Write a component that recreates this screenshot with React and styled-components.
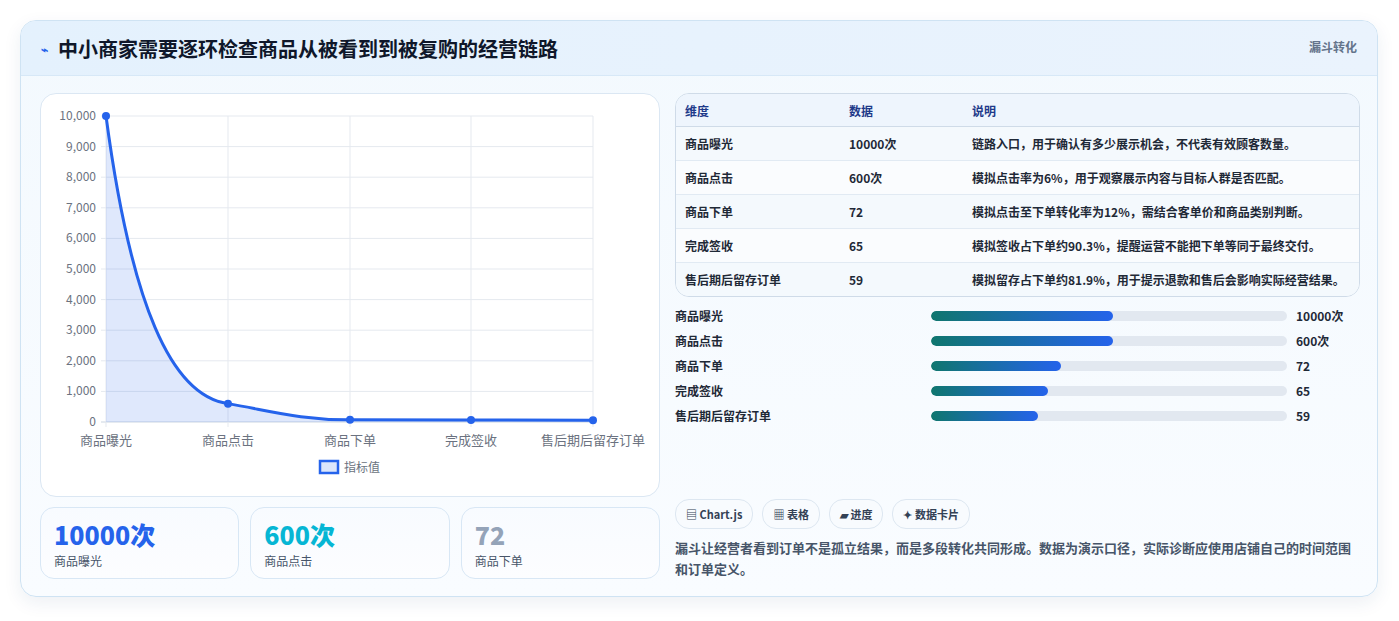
import React from "react";
import styled, { createGlobalStyle } from "styled-components";

const G = createGlobalStyle`
  body{margin:0;background:#fff;font-family:"Noto Sans CJK SC","Noto Sans",sans-serif;}
`;
const Page = styled.div`padding:20px 21px 22px 20px;`;
const Card = styled.div`
  border:1px solid #cfe3f3;border-radius:16px;overflow:hidden;
  background:linear-gradient(180deg,#f3f9fe,#f9fcff);
  box-shadow:0 6px 18px rgba(30,60,120,.08);
`;
const Header = styled.div`
  height:54px;display:flex;align-items:center;justify-content:space-between;
  padding:0 20px;background:linear-gradient(90deg,#e4f1fd,#eaf3fd);border-bottom:1px solid #d7e8f7;
`;
const Title = styled.h1`
  margin:0;font-size:20px;font-weight:700;color:#0f172a;display:flex;align-items:center;gap:10px;
  span{font-size:12px;color:#2563eb;}
`;
const Tag = styled.div`font-size:12px;font-weight:700;color:#64748b;align-self:flex-start;margin-top:17px;`;
const Body = styled.div`display:grid;grid-template-columns:620px 1fr;gap:15px;padding:17px 17px 17px 19px;`;
const Col = styled.div`display:flex;flex-direction:column;gap:10px;`;
const ChartBox = styled.div`background:#fff;border:1px solid #dbe7f3;border-radius:16px;height:402px;`;
const Stats = styled.div`display:grid;grid-template-columns:repeat(3,1fr);gap:11px;`;
const Stat = styled.div`
  border:1px solid #d8e7f5;border-radius:14px;height:72px;padding:10px 13px;box-sizing:border-box;
  background:linear-gradient(180deg,#f8fbff,#fcfdff);
`;
const StatVal = styled.div`font-size:25px;font-weight:800;line-height:32px;color:${p=>p.c};`;
const StatLbl = styled.div`font-size:12px;color:#475569;margin-top:2px;`;
const Table = styled.table`
  width:100%;border-collapse:separate;border-spacing:0;border:1px solid #cfdbe8;border-radius:14px;overflow:hidden;
  font-size:12px;
  th{text-align:left;color:#1e3a8a;font-weight:700;height:32px;padding:0 9px;background:#eef5fd;border-bottom:1px solid #cfdbe8;}
  td{height:33px;padding:0 9px;color:#1f2937;font-weight:600;border-top:1px solid #e1eaf3;}
  tbody tr:first-child td{border-top:none;}
  tbody tr:nth-child(odd) td{background:#f4f9fd;}
  tbody tr:nth-child(even) td{background:#fafcfe;}
`;
const Bars = styled.div`display:flex;flex-direction:column;gap:8px;`;
const BarRow = styled.div`display:grid;grid-template-columns:247px 356px 1fr;align-items:center;gap:9px;font-size:12px;font-weight:700;color:#1f2937;height:17px;`;
const Track = styled.div`height:10px;border-radius:5px;background:#e2e8f0;overflow:hidden;`;
const Fill = styled.div`height:100%;border-radius:5px;background:linear-gradient(90deg,#0f766e,#2563eb);`;
const Chips = styled.div`display:flex;gap:9px;margin-top:auto;`;
const Chip = styled.div`height:28px;padding:0 10px;border:1px solid #dde7f1;border-radius:14px;background:#f8fbfe;display:flex;align-items:center;gap:4px;font-size:11px;font-weight:700;color:#334155;`;
const Note = styled.p`margin:-2px 0 0;font-size:13px;line-height:21px;color:#475569;font-weight:600;`;
const Right = styled(Col)`gap:10px;`;

const rows=[["商品曝光","10000次","链路入口，用于确认有多少展示机会，不代表有效顾客数量。",51],["商品点击","600次","模拟点击率为6%，用于观察展示内容与目标人群是否匹配。",51],["商品下单","72","模拟点击至下单转化率为12%，需结合客单价和商品类别判断。",36.4],["完成签收","65","模拟签收占下单约90.3%，提醒运营不能把下单等同于最终交付。",33],["售后期后留存订单","59","模拟留存占下单约81.9%，用于提示退款和售后会影响实际经营结果。",30]];

function Chart(){
  const xs=[65,187,309,430,552];
  const yl=["10,000","9,000","8,000","7,000","6,000","5,000","4,000","3,000","2,000","1,000","0"];
  const y=v=>22+306*(1-v/10000);
  const vals=[10000,600,72,65,59];
  const f="Noto Sans CJK SC,sans-serif";
  return(
  <svg width="618" height="400">
    {yl.map((l,i)=>{const yy=22+i*30.6;return <g key={i}>
      <line x1="60" x2="552" y1={yy} y2={yy} stroke={i===10?"#cbd5e1":"#e5e9ef"}/>
      <text x="55" y={yy+4} textAnchor="end" fontSize="12" fill="#6b7280" fontFamily={f}>{l}</text></g>})}
    {xs.map((x,i)=><line key={i} x1={x} x2={x} y1="22" y2="333" stroke="#e5e9ef"/>)}
    <path d={`M65,${y(10000)} C90,210 130,302 187,${y(600)} C230,317 260,326 309,${y(72)} C350,326 390,326 430,${y(65)} C470,326 510,326 552,${y(59)} L552,328 L65,328Z`} fill="rgba(37,99,235,.15)"/>
    <path d={`M65,${y(10000)} C90,210 130,302 187,${y(600)} C230,317 260,326 309,${y(72)} C350,326 390,326 430,${y(65)} C470,326 510,326 552,${y(59)}`} fill="none" stroke="#2563eb" strokeWidth="3"/>
    {xs.map((x,i)=><circle key={i} cx={x} cy={y(vals[i])} r="4" fill="#2563eb"/>)}
    {["商品曝光","商品点击","商品下单","完成签收","售后期后留存订单"].map((l,i)=><text key={i} x={xs[i]} y="351" textAnchor="middle" fontSize="13" fill="#6b7280" fontFamily={f}>{l}</text>)}
    <rect x="279" y="367" width="18" height="12" fill="#dbe6fb" stroke="#2563eb" strokeWidth="2.5"/>
    <text x="303" y="378" fontSize="12" fill="#6b7280" fontFamily={f}>指标值</text>
  </svg>);
}

export default function App(){
  return(<Page><G/><Card>
    <Header><Title><span>⌁</span>中小商家需要逐环检查商品从被看到到被复购的经营链路</Title><Tag>漏斗转化</Tag></Header>
    <Body>
      <Col>
        <ChartBox><Chart/></ChartBox>
        <Stats>
          <Stat><StatVal c="#2563eb">10000次</StatVal><StatLbl>商品曝光</StatLbl></Stat>
          <Stat><StatVal c="#06b6d4">600次</StatVal><StatLbl>商品点击</StatLbl></Stat>
          <Stat><StatVal c="#94a3b8">72</StatVal><StatLbl>商品下单</StatLbl></Stat>
        </Stats>
      </Col>
      <Right>
        <Table><thead><tr><th style={{width:146}}>维度</th><th style={{width:105}}>数据</th><th>说明</th></tr></thead>
          <tbody>{rows.map(r=><tr key={r[0]}><td>{r[0]}</td><td>{r[1]}</td><td>{r[2]}</td></tr>)}</tbody></Table>
        <Bars>{rows.map(r=><BarRow key={r[0]}><span>{r[0]}</span><Track><Fill style={{width:r[3]+"%"}}/></Track><span>{r[1]}</span></BarRow>)}</Bars>
        <Chips><Chip>▤ Chart.js</Chip><Chip>▦ 表格</Chip><Chip>▰ 进度</Chip><Chip>✦ 数据卡片</Chip></Chips>
        <Note>漏斗让经营者看到订单不是孤立结果，而是多段转化共同形成。数据为演示口径，实际诊断应使用店铺自己的时间范围和订单定义。</Note>
      </Right>
    </Body>
  </Card></Page>);
}
